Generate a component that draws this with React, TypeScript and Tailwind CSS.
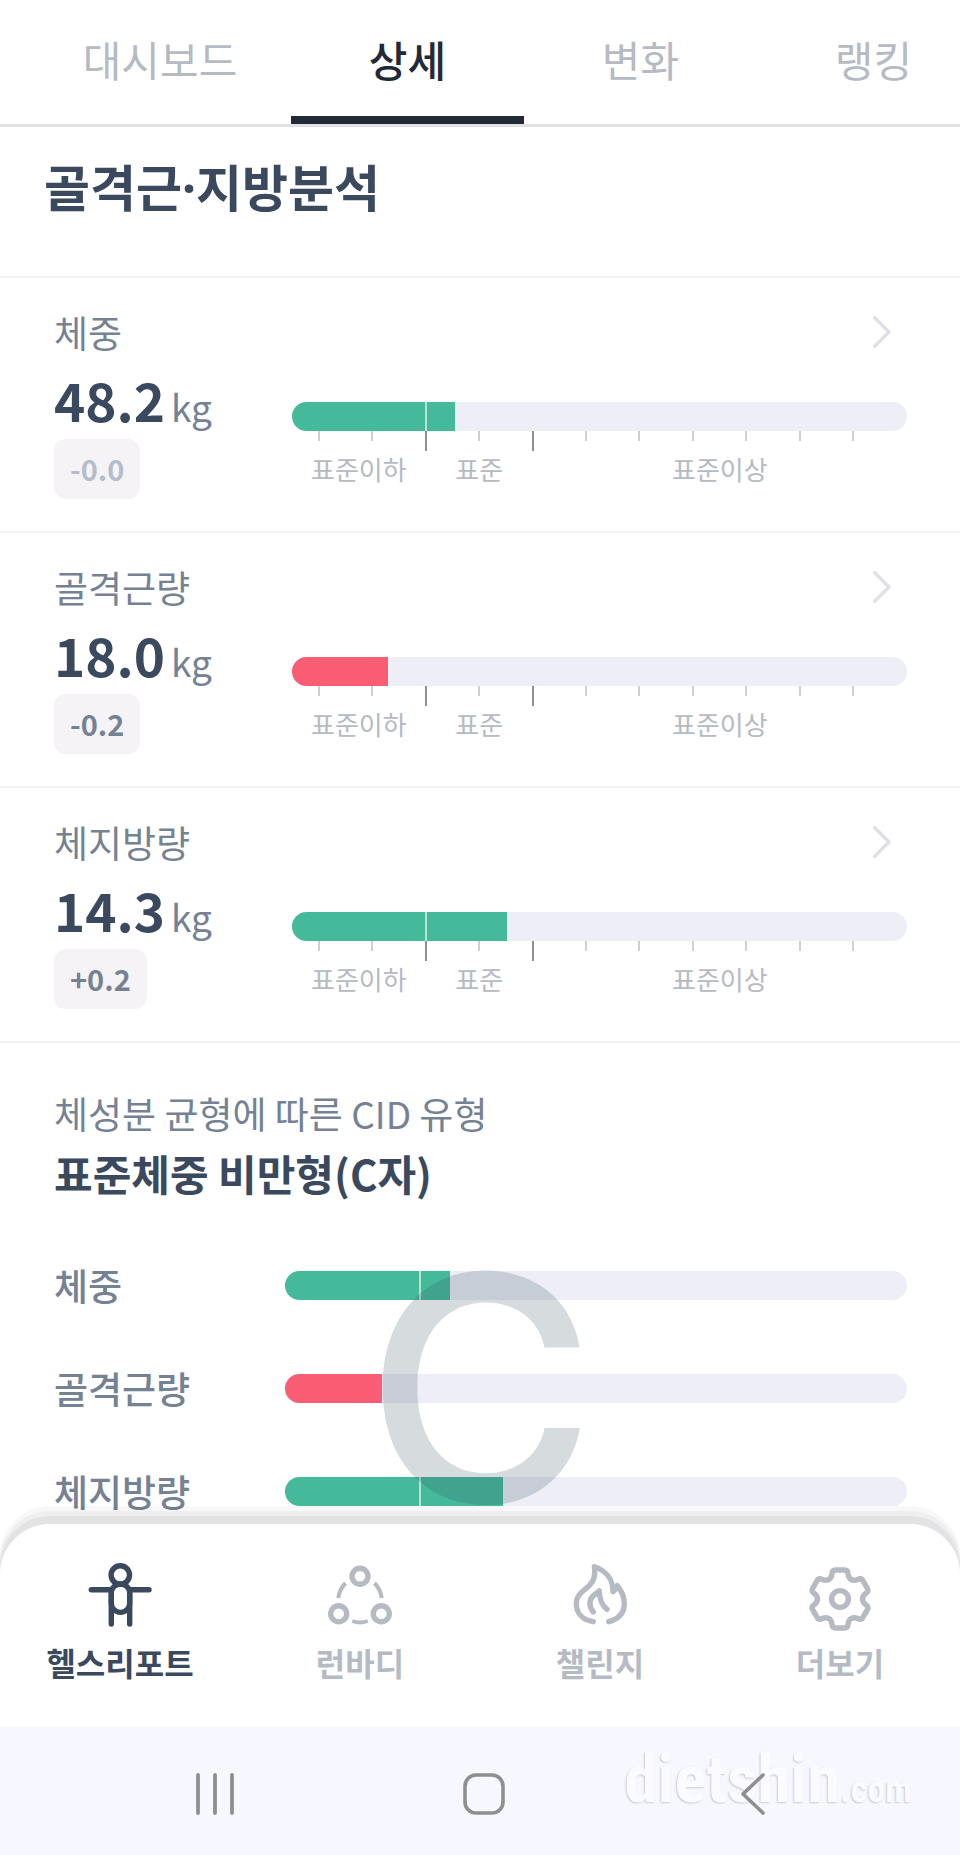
import { useState } from 'react';
import type { ReactNode } from 'react';
import clsx from 'clsx';

type Tone = 'normal' | 'low';

interface Metric {
  id: string;
  label: string;
  value: string;
  change: string;
  muted?: boolean;
  percent: number;
  tone: Tone;
}

const TABS = ['대시보드', '상세', '변화', '랭킹'];

const METRICS: Metric[] = [
  { id: 'weight', label: '체중', value: '48.2', change: '-0.0', muted: true, percent: 26.5, tone: 'normal' },
  { id: 'muscle', label: '골격근량', value: '18.0', change: '-0.2', percent: 15.6, tone: 'low' },
  { id: 'fat', label: '체지방량', value: '14.3', change: '+0.2', percent: 35, tone: 'normal' },
];

// Tick marks under a bar, the long ones bound the standard range
const TICKS = [0, 1, 2, 3, 4, 5, 6, 7, 8, 9, 10];
const LONG_TICKS = [2, 4];

interface BarProps {
  percent: number;
  tone: Tone;
}

function Bar({ percent, tone }: BarProps) {
  return (
    <div className="relative h-[29px] overflow-hidden rounded-full bg-[#edeef6]">
      <div
        className={clsx('h-full', tone === 'normal' ? 'bg-[#45ba9b]' : 'bg-[#f85d73]')}
        style={{ width: `${percent}%` }}
      />
      {percent > 21.7 && <div className="absolute inset-y-0 left-[21.6%] w-0.5 bg-white/60" />}
    </div>
  );
}

function Scale() {
  return (
    <>
      <div className="mr-[53px] ml-[26px] flex h-5 justify-between">
        {TICKS.map(i => (
          <span
            key={i}
            className={clsx('w-0.5', LONG_TICKS.includes(i) ? 'h-5 bg-[#8e8f91]' : 'h-2.5 bg-[#cfd0d3]')}
          />
        ))}
      </div>
      <div className="mt-0.5 flex text-center text-[26px] leading-8 text-[#b5bac3]">
        <span className="flex-[5]">표준이하</span>
        <span className="flex-[4]">표준</span>
        <span className="flex-[14]">표준이상</span>
      </div>
    </>
  );
}

function MetricRow({ metric }: { metric: Metric }) {
  return (
    <section className="flex border-b-2 border-[#f3f3f5] pt-7 pr-[53px] pb-8 pl-[54px]">
      <div className="w-[238px] shrink-0">
        <h3 className="text-[37px] leading-[53px] text-[#758294]">{metric.label}</h3>
        <p className="flex items-baseline gap-1.5">
          <span className="text-[53px] leading-[80px] font-bold text-[#3b495e]">{metric.value}</span>
          <span className="text-[37px] leading-none text-[#758294]">kg</span>
        </p>
        <div
          className={clsx(
            'flex h-15 w-fit items-center rounded-xl bg-[#f6f3f7] px-4 text-[29px] font-bold',
            metric.muted ? 'text-[#b4bdc9]' : 'text-[#758294]'
          )}
        >
          {metric.change}
        </div>
      </div>
      <div className="min-w-0 flex-1">
        <div className="mb-11 flex h-[52px] items-center justify-end pr-4">
          <button type="button" aria-label={metric.label}>
            <svg className="h-8 w-[18px]" viewBox="0 0 18 32" fill="none" stroke="#dfe1e6" strokeWidth="3.4">
              <path d="M1.7 1.7 16 16 1.7 30.3" strokeLinecap="round" strokeLinejoin="round" />
            </svg>
          </button>
        </div>
        <Bar percent={metric.percent} tone={metric.tone} />
        <Scale />
      </div>
    </section>
  );
}

function BodyIcon() {
  return (
    <svg className="size-16" viewBox="0 0 64 64" fill="none" stroke="currentColor" strokeWidth="5.4" strokeLinecap="round">
      <circle cx="32.3" cy="12" r="9.2" />
      <path d="M3.3 26.7H23M42 26.7H61" />
      <rect x="23.3" y="21" width="18.4" height="28.4" rx="9.2" />
      <path d="M23.3 27V61M41.7 27V61" />
    </svg>
  );
}

function RunBodyIcon() {
  return (
    <svg className="size-16" viewBox="0 0 64 64" fill="none" stroke="currentColor">
      <g strokeWidth="5.4">
        <circle cx="32" cy="13.3" r="8" />
        <circle cx="10.7" cy="50.7" r="8" />
        <circle cx="53.3" cy="50.7" r="8" />
      </g>
      <path d="M17.6 20Q11.6 26 10.2 35M46.4 20Q52.4 26 53.8 35M24.2 58Q32 61 39.8 58" strokeWidth="4" />
    </svg>
  );
}

function FlameIcon() {
  return (
    <svg
      className="size-16"
      viewBox="0 0 64 64"
      fill="none"
      stroke="currentColor"
      strokeWidth="5.4"
      strokeLinecap="round"
      strokeLinejoin="round"
    >
      <path d="M25.3 58.7C14.5 57 8.3 50 8.3 40.5C8.3 34.5 11 31 16 27.2C24 21 28 16 26.4 3.7C38 7.5 45 16.5 45 28.5C47 27.5 48.5 25.5 49.3 22.6C54.5 29 56.3 34.5 56.3 40.5C56.3 50 50.5 56 40.7 58.7" />
      <path d="M25.3 49C20.5 43 21 36.5 25.5 32.5C28 30.5 29.8 29.5 31.3 27.8C31.5 37 33.5 42 39 46.3" />
    </svg>
  );
}

function GearIcon() {
  return (
    <svg
      className="size-16 overflow-visible"
      viewBox="0 0 64 64"
      fill="none"
      stroke="currentColor"
      strokeWidth="5.4"
      strokeLinecap="round"
    >
      <g transform="translate(32 36)">
        {[0, 60, 120, 180, 240, 300].map(angle => (
          <path
            key={angle}
            transform={`rotate(${angle})`}
            d="M-11.3 -19.5C-9.2 -20.7 -8.3 -22.5 -8.1 -25C-7.9 -27.6 -6.5 -29 -4.5 -29H4.5C6.5 -29 7.9 -27.6 8.1 -25C8.3 -22.5 9.2 -20.7 11.3 -19.5"
          />
        ))}
        <circle r="8.4" />
      </g>
    </svg>
  );
}

const NAV_ITEMS: { label: string; icon: ReactNode }[] = [
  { label: '헬스리포트', icon: <BodyIcon /> },
  { label: '런바디', icon: <RunBodyIcon /> },
  { label: '챌린지', icon: <FlameIcon /> },
  { label: '더보기', icon: <GearIcon /> },
];

function SystemBar() {
  return (
    <div className="relative flex h-32 items-center bg-[#f7f8ff] pt-1.5 pr-18 pl-20 text-[#8f8f8f]">
      <button type="button" aria-label="최근 앱" className="flex flex-1 justify-center">
        <svg className="size-[42px]" viewBox="0 0 42 42" stroke="currentColor" strokeWidth="3.8" strokeLinecap="round">
          <path d="M4 2V40M21 2V40M38 2V40" />
        </svg>
      </button>
      <button type="button" aria-label="홈" className="flex flex-1 justify-center">
        <svg className="size-[42px]" viewBox="0 0 42 42" fill="none" stroke="currentColor" strokeWidth="3.6">
          <rect x="2" y="2" width="38" height="38" rx="11" />
        </svg>
      </button>
      <button type="button" aria-label="뒤로" className="relative z-10 flex flex-1 justify-center">
        <svg className="size-[42px]" viewBox="0 0 42 42" fill="none" stroke="currentColor" strokeWidth="3.6">
          <path d="M31 2 11 21 31 40" strokeLinecap="round" strokeLinejoin="round" />
        </svg>
      </button>
      <div className="pointer-events-none absolute top-1 right-12 flex items-baseline font-['Roboto_Condensed',sans-serif] font-bold text-[#fafaff] [text-shadow:-1px_1px_2px_rgb(0_0_0/0.18)]">
        <span className="text-[67px] leading-[96px]">dietshin</span>
        <span className="text-[36px] leading-none">.com</span>
      </div>
    </div>
  );
}

export default function App() {
  const [activeTab, setActiveTab] = useState('상세');
  const [activeNav, setActiveNav] = useState('헬스리포트');

  return (
    <div className="flex min-h-screen flex-col overflow-x-hidden bg-white font-['Noto_Sans_CJK_KR',sans-serif]">
      {/* Tabs, the last one runs past the edge */}
      <header className="flex overflow-hidden border-b-3 border-[#e1e2e5] pl-[29px]">
        {TABS.map(tab => (
          <button
            key={tab}
            type="button"
            onClick={() => setActiveTab(tab)}
            className={clsx(
              'h-31 w-[233px] shrink-0 border-b-8 text-[42px] first:w-[262px]',
              tab === activeTab
                ? 'border-[#222a37] font-medium text-[#222a37]'
                : 'border-transparent text-[#b5bac3]'
            )}
          >
            {tab}
          </button>
        ))}
      </header>

      <main className="flex-1">
        <h2 className="border-b-2 border-[#f3f3f5] px-11 pt-[22px] pb-[55px] text-[50px] leading-[72px] font-bold text-[#3b495e]">
          골격근<span className="font-['Noto_Sans',sans-serif] leading-none">·</span>지방분석
        </h2>

        {METRICS.map(metric => (
          <MetricRow key={metric.id} metric={metric} />
        ))}

        {/* CID type */}
        <section className="pt-[46px] pr-[53px] pb-[9px] pl-[54px]">
          <p className="text-[37px] leading-[48px] text-[#758294]">체성분 균형에 따른 CID 유형</p>
          <h2 className="text-[42px] leading-[72px] font-bold text-[#3b495e]">표준체중 비만형(C자)</h2>
          <div className="relative mt-[52px] flex flex-col gap-[55px]">
            {METRICS.map(metric => (
              <div key={metric.id} className="flex h-12 items-center">
                <span className="w-[231px] shrink-0 text-[37px] leading-[48px] font-medium text-[#758294]">
                  {metric.label}
                </span>
                <div className="flex-1">
                  <Bar percent={metric.percent} tone={metric.tone} />
                </div>
              </div>
            ))}
            <div className="pointer-events-none absolute inset-0 flex items-center justify-center font-['Inter',sans-serif] text-[314px] leading-none font-medium text-[#334b5c]/20">
              C
            </div>
          </div>
        </section>
      </main>

      <nav className="relative flex rounded-t-[50px] bg-white pt-[39px] pb-[41px] shadow-[0_-8px_0_rgb(20_20_40/0.05),0_-13px_0_rgb(20_20_40/0.04),0_-18px_0_rgb(20_20_40/0.03)]">
        {NAV_ITEMS.map(item => (
          <button
            key={item.label}
            type="button"
            onClick={() => setActiveNav(item.label)}
            className={clsx(
              'flex flex-1 flex-col items-center gap-[11px] text-[32px] leading-[48px] font-bold',
              item.label === activeNav ? 'text-[#3b495e]' : 'text-[#b5bac3]'
            )}
          >
            {item.icon}
            {item.label}
          </button>
        ))}
      </nav>

      <SystemBar />
    </div>
  );
}
